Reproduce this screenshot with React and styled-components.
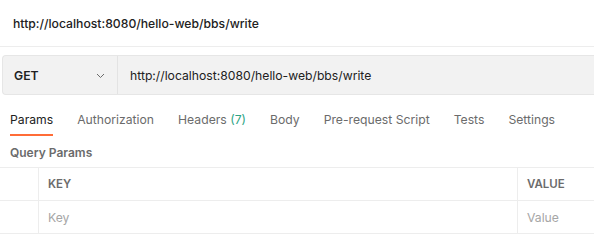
import React from "react";
import styled, { createGlobalStyle } from "styled-components";

const Global = createGlobalStyle`
  body {
    margin: 0;
    background: #ffffff;
    font-family: Inter, "Noto Sans", sans-serif;
  }
`;

const Page = styled.div`
  width: 594px;
  height: 252px;
  overflow: hidden;
  background: #ffffff;
`;

const TitleBar = styled.div`
  height: 46px;
  display: flex;
  align-items: center;
  padding-left: 13px;
  border-bottom: 1px solid #ededed;
  font-size: 12.2px;
  font-weight: 500;
  color: #212121;
`;

const RequestBar = styled.div`
  margin: 8px 0 0 2px;
  height: 38px;
  display: flex;
  background: #f2f2f2;
  border: 1px solid #e6e6e6;
  border-right: none;
  border-radius: 4px 0 0 4px;
`;

const Method = styled.div`
  width: 115px;
  display: flex;
  align-items: center;
  justify-content: space-between;
  padding: 0 12px 0 11px;
  box-sizing: border-box;
  border-right: 1px solid #e3e3e3;
  font-size: 12.2px;
  font-weight: 600;
  color: #212121;
`;

const Url = styled.div`
  display: flex;
  align-items: center;
  padding-left: 12px;
  font-size: 12.2px;
  color: #212121;
`;

const Tabs = styled.div`
  display: flex;
  gap: 24px;
  padding-left: 10px;
  margin-top: 10px;
`;

const Tab = styled.div`
  padding: 7px 0 7px;
  font-size: 12.2px;
  color: ${(p) => (p.$active ? "#212121" : "#6b6b6b")};
  border-bottom: 2px solid ${(p) => (p.$active ? "#ff6c37" : "transparent")};
`;

const Count = styled.span`
  color: #2ea485;
`;

const Section = styled.div`
  padding: 9px 0 0 10px;
  height: 22px;
  font-size: 12px;
  font-weight: 600;
  color: #6b6b6b;
`;

const Table = styled.div`
  border-top: 1px solid #ededed;
`;

const Row = styled.div`
  display: grid;
  grid-template-columns: 38px 1fr 77px;
  height: 32px;
  border-bottom: 1px solid #ededed;
`;

const Cell = styled.div`
  display: flex;
  align-items: center;
  padding-left: 9px;
  font-size: ${(p) => (p.$head ? "11.5px" : "12.2px")};
  font-weight: ${(p) => (p.$head ? 600 : 400)};
  color: ${(p) => (p.$head ? "#6b6b6b" : "#a6a6a6")};
  border-left: ${(p) => (p.$first ? "none" : "1px solid #ededed")};
`;

const Chevron = () => (
  <svg width="9" height="9" viewBox="0 0 9 9" fill="none">
    <path d="M1 3 L4.5 6.5 L8 3" stroke="#6b6b6b" strokeWidth="1" />
  </svg>
);

const App = () => (
  <Page>
    <Global />
    <TitleBar>http://localhost:8080/hello-web/bbs/write</TitleBar>
    <RequestBar>
      <Method>
        GET
        <Chevron />
      </Method>
      <Url>http://localhost:8080/hello-web/bbs/write</Url>
    </RequestBar>
    <Tabs>
      <Tab $active>Params</Tab>
      <Tab>Authorization</Tab>
      <Tab>
        Headers <Count>(7)</Count>
      </Tab>
      <Tab>Body</Tab>
      <Tab>Pre-request Script</Tab>
      <Tab>Tests</Tab>
      <Tab>Settings</Tab>
    </Tabs>
    <Section>Query Params</Section>
    <Table>
      <Row>
        <Cell $first />
        <Cell $head>KEY</Cell>
        <Cell $head>VALUE</Cell>
      </Row>
      <Row>
        <Cell $first />
        <Cell>Key</Cell>
        <Cell>Value</Cell>
      </Row>
    </Table>
  </Page>
);

export default App;
